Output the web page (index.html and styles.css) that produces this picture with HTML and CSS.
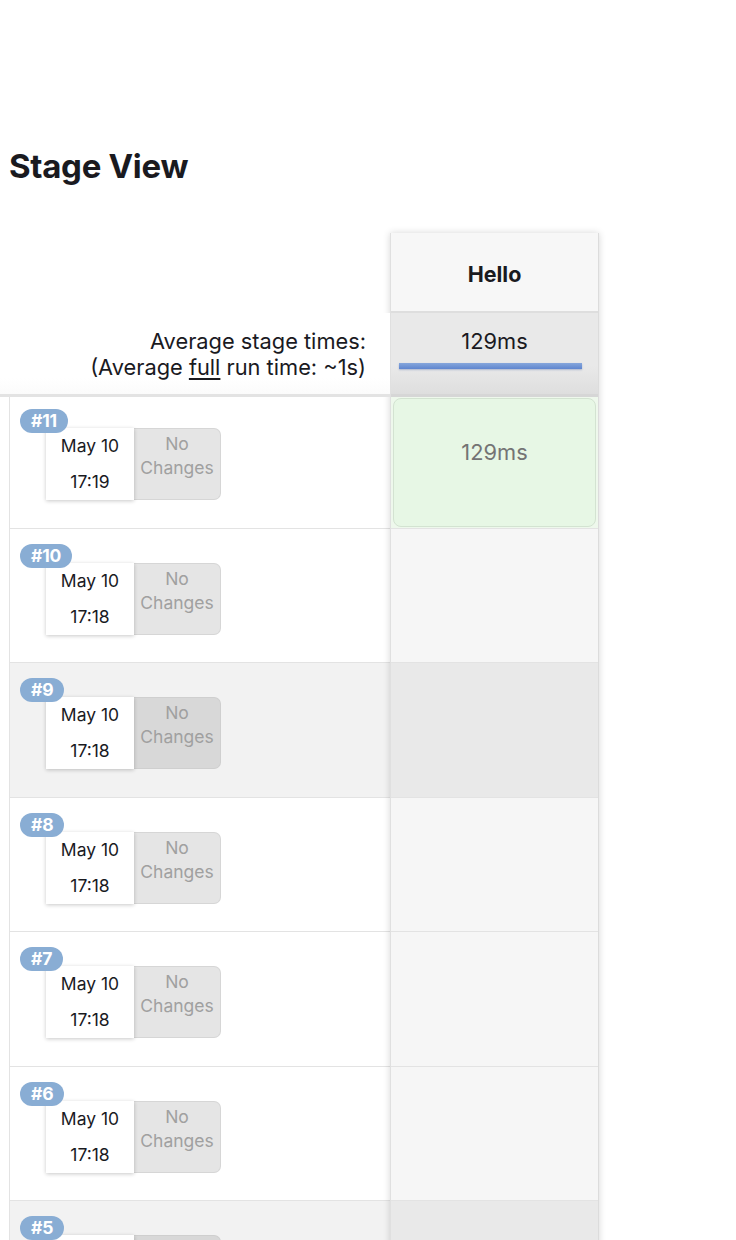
FILE: index.html
```html
<!DOCTYPE html>
<html lang="en">
<head>
    <meta charset="UTF-8">
    <title>Stage View</title>
    <link rel="stylesheet" href="styles.css">
</head>
<body>
    <div class="page">
        <h2 class="title">Stage View</h2>
        <div class="stage-view">
            <div class="builds">
                <div class="head-blank"></div>
                <div class="avg-label">Average stage times:<br>(Average <u>full</u> run time: ~1s)</div>

                <div class="build-row">
                    <span class="badge">#11</span>
                    <div class="date"><div>May 10</div><div>17:19</div></div>
                    <div class="changes">No<br>Changes</div>
                </div>
                <div class="build-row">
                    <span class="badge">#10</span>
                    <div class="date"><div>May 10</div><div>17:18</div></div>
                    <div class="changes">No<br>Changes</div>
                </div>
                <div class="build-row shaded">
                    <span class="badge">#9</span>
                    <div class="date"><div>May 10</div><div>17:18</div></div>
                    <div class="changes">No<br>Changes</div>
                </div>
                <div class="build-row">
                    <span class="badge">#8</span>
                    <div class="date"><div>May 10</div><div>17:18</div></div>
                    <div class="changes">No<br>Changes</div>
                </div>
                <div class="build-row">
                    <span class="badge">#7</span>
                    <div class="date"><div>May 10</div><div>17:18</div></div>
                    <div class="changes">No<br>Changes</div>
                </div>
                <div class="build-row">
                    <span class="badge">#6</span>
                    <div class="date"><div>May 10</div><div>17:18</div></div>
                    <div class="changes">No<br>Changes</div>
                </div>
                <div class="build-row shaded">
                    <span class="badge">#5</span>
                    <div class="date"><div>May 10</div><div>17:18</div></div>
                    <div class="changes">No<br>Changes</div>
                </div>
            </div>

            <div class="stage-col">
                <div class="stage-head">Hello</div>
                <div class="stage-avg">
                    <div>129ms</div>
                    <div class="bar"></div>
                </div>
                <div class="stage-cell success"><div class="ok-box">129ms</div></div>
                <div class="stage-cell"></div>
                <div class="stage-cell shaded"></div>
                <div class="stage-cell"></div>
                <div class="stage-cell"></div>
                <div class="stage-cell"></div>
                <div class="stage-cell shaded"></div>
            </div>
        </div>
    </div>
</body>
</html>
```

FILE: styles.css
```css
body {
    margin: 0;
    font-family: Inter, "Noto Sans", sans-serif;
    color: #1a1a1f;
    background-color: #fff;
    height: 1240px;
    overflow: hidden;
}
.page {
    padding: 0 9px;
}
.title {
    font-size: 33px;
    font-weight: 700;
    line-height: 40px;
    margin: 146px 0 0;
    letter-spacing: -0.3px;
}
.stage-view {
    display: flex;
    margin-top: 47px;
}
.builds {
    width: 381px;
}
.head-blank {
    height: 80px;
}
.avg-label {
    position: relative;
    z-index: 2;
    height: 66px;
    margin: 0 0 -3px -9px;
    padding: 15px 24px 0 0;
    text-align: right;
    font-size: 21.8px;
    line-height: 26px;
    border-bottom: 3px solid #e3e3e3;
    background: linear-gradient(#fff 80%, #fbfbfb);
}
.avg-label u {
    text-underline-offset: 3px;
}
.build-row {
    position: relative;
    display: flex;
    height: 99.5px;
    padding: 34px 0 0 36px;
    border-left: 1px solid #e3e3e3;
    border-bottom: 1px solid #e3e3e3;
    background-color: #fff;
}
.build-row.shaded {
    background-color: #f2f2f2;
}
.badge {
    position: absolute;
    left: 10px;
    top: 15px;
    z-index: 1;
    height: 24px;
    line-height: 24px;
    padding: 0 11px;
    border-radius: 12px;
    background-color: #89add4;
    color: #fff;
    font-weight: 700;
    font-size: 17.5px;
    letter-spacing: -0.2px;
}
.date {
    width: 88px;
    height: 72px;
    background-color: #fff;
    box-shadow: 0 1px 4px rgba(0,0,0,0.22);
    text-align: center;
    font-size: 17.5px;
    line-height: 36px;
    position: relative;
}
.changes {
    width: 87px;
    height: 72px;
    box-sizing: border-box;
    padding-top: 3px;
    background-color: #e5e5e5;
    border: 1px solid #d6d6d6;
    border-left: none;
    border-radius: 0 7px 7px 0;
    color: #a0a0a0;
    text-align: center;
    font-size: 17.5px;
    line-height: 24px;
}
.shaded .changes {
    background-color: #d8d8d8;
    border-color: #cfcfcf;
}
.stage-col {
    width: 209px;
    box-sizing: border-box;
    border-left: 1px solid #e0e0e0;
    border-right: 1px solid #dcdcdc;
    box-shadow: 0 0 7px rgba(0,0,0,0.16);
    position: relative;
}
.stage-head {
    height: 80px;
    box-sizing: border-box;
    background-color: #f7f7f7;
    border-bottom: 2px solid #dedede;
    text-align: center;
    font-weight: 700;
    font-size: 21.5px;
    line-height: 82px;
}
.stage-avg {
    height: 81px;
    box-sizing: border-box;
    padding-top: 15px;
    background: linear-gradient(#e9e9e9 65%, #dedede);
    text-align: center;
    font-size: 21.8px;
    line-height: 26px;
}
.bar {
    height: 6px;
    width: 183px;
    margin: 9px 0 0 8px;
    background: linear-gradient(#86a7dc, #5f86cf);
    box-shadow: 0 1px 2px rgba(60,90,160,0.35);
}
.stage-cell {
    height: 133.5px;
    border-bottom: 1px solid #e3e3e3;
    background-color: #f6f6f6;
}
.stage-cell.shaded {
    background-color: #e9e9e9;
}
.stage-cell.success {
    height: 128.5px;
    padding: 1px 2px;
    border-top: 3px solid #d6d6d6;
    background-color: #eef8ec;
}
.ok-box {
    height: 100%;
    box-sizing: border-box;
    padding-top: 40px;
    background-color: #e7f7e5;
    border: 1px solid #d3e3d1;
    border-radius: 8px;
    text-align: center;
    color: #747474;
    font-size: 21.8px;
    line-height: 26px;
}
```
